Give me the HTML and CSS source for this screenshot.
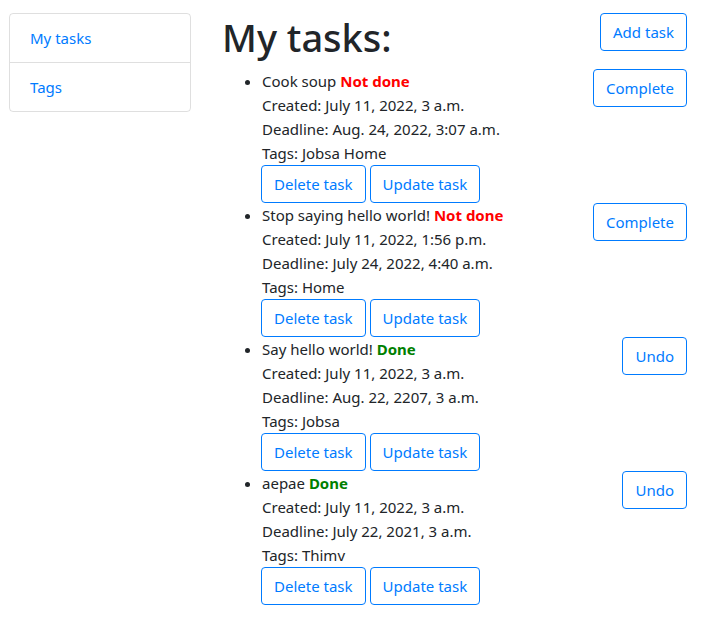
FILE: index.html
```html
<!DOCTYPE html>
<html>
<head>
<meta charset="utf-8">
<link rel="stylesheet" href="styles.css">
</head>
<body>
<div class="page">
  <nav class="sidebar">
    <a class="side-item" href="#">My tasks</a>
    <a class="side-item" href="#">Tags</a>
  </nav>
  <main class="main">
    <div class="header">
      <h1 class="title">My tasks:</h1>
      <a class="btn" href="#">Add task</a>
    </div>
    <ul class="tasks">
      <li class="task">
        <a class="btn btn-side" href="#">Complete</a>
        <div class="line">Cook soup <b class="notdone">Not done</b></div>
        <div class="line">Created: July 11, 2022, 3 a.m.</div>
        <div class="line">Deadline: Aug. 24, 2022, 3:07 a.m.</div>
        <div class="line">Tags: Jobsa Home</div>
        <div class="actions"><a class="btn" href="#">Delete task</a><a class="btn" href="#">Update task</a></div>
      </li>
      <li class="task">
        <a class="btn btn-side" href="#">Complete</a>
        <div class="line">Stop saying hello world! <b class="notdone">Not done</b></div>
        <div class="line">Created: July 11, 2022, 1:56 p.m.</div>
        <div class="line">Deadline: July 24, 2022, 4:40 a.m.</div>
        <div class="line">Tags: Home</div>
        <div class="actions"><a class="btn" href="#">Delete task</a><a class="btn" href="#">Update task</a></div>
      </li>
      <li class="task">
        <a class="btn btn-side" href="#">Undo</a>
        <div class="line">Say hello world! <b class="done">Done</b></div>
        <div class="line">Created: July 11, 2022, 3 a.m.</div>
        <div class="line">Deadline: Aug. 22, 2207, 3 a.m.</div>
        <div class="line">Tags: Jobsa</div>
        <div class="actions"><a class="btn" href="#">Delete task</a><a class="btn" href="#">Update task</a></div>
      </li>
      <li class="task">
        <a class="btn btn-side" href="#">Undo</a>
        <div class="line">aepae <b class="done">Done</b></div>
        <div class="line">Created: July 11, 2022, 3 a.m.</div>
        <div class="line">Deadline: July 22, 2021, 3 a.m.</div>
        <div class="line">Tags: Thimv</div>
        <div class="actions"><a class="btn" href="#">Delete task</a><a class="btn" href="#">Update task</a></div>
      </li>
    </ul>
  </main>
</div>
</body>
</html>
```

FILE: styles.css
```css
* { box-sizing: border-box; }
html, body { margin: 0; padding: 0; background: #fff; }
body {
  font-family: "Noto Sans", "Open Sans", sans-serif;
  font-size: 15px;
  line-height: 24px;
  color: #212529;
}
.page {
  display: flex;
  align-items: flex-start;
  padding: 13px 25px 0 9px;
}
.sidebar {
  width: 182px;
  flex: none;
  display: flex;
  flex-direction: column;
  border: 1px solid rgba(0,0,0,.125);
  border-radius: 4px;
}
.side-item {
  display: block;
  padding: 12px 20px;
  color: #007bff;
  text-decoration: none;
}
.side-item + .side-item { border-top: 1px solid rgba(0,0,0,.125); }
.main {
  flex: 1;
  margin-left: 31px;
}
.header {
  display: flex;
  justify-content: space-between;
  align-items: flex-start;
}
.title {
  margin: 0 0 8px 0;
  font-size: 38px;
  line-height: 48px;
  font-weight: 500;
}
.btn {
  display: inline-block;
  padding: 6px 12px;
  border: 1px solid #007bff;
  border-radius: 4px;
  color: #007bff;
  text-decoration: none;
  line-height: 24px;
  background: #fff;
}
.tasks {
  margin: 0;
  padding-left: 40px;
}
.btn-side { float: right; }
.notdone { color: #ff0000; font-weight: 700; }
.done { color: #008000; font-weight: 700; }
.actions { display: flex; gap: 4px; margin-left: -1px; }
```
